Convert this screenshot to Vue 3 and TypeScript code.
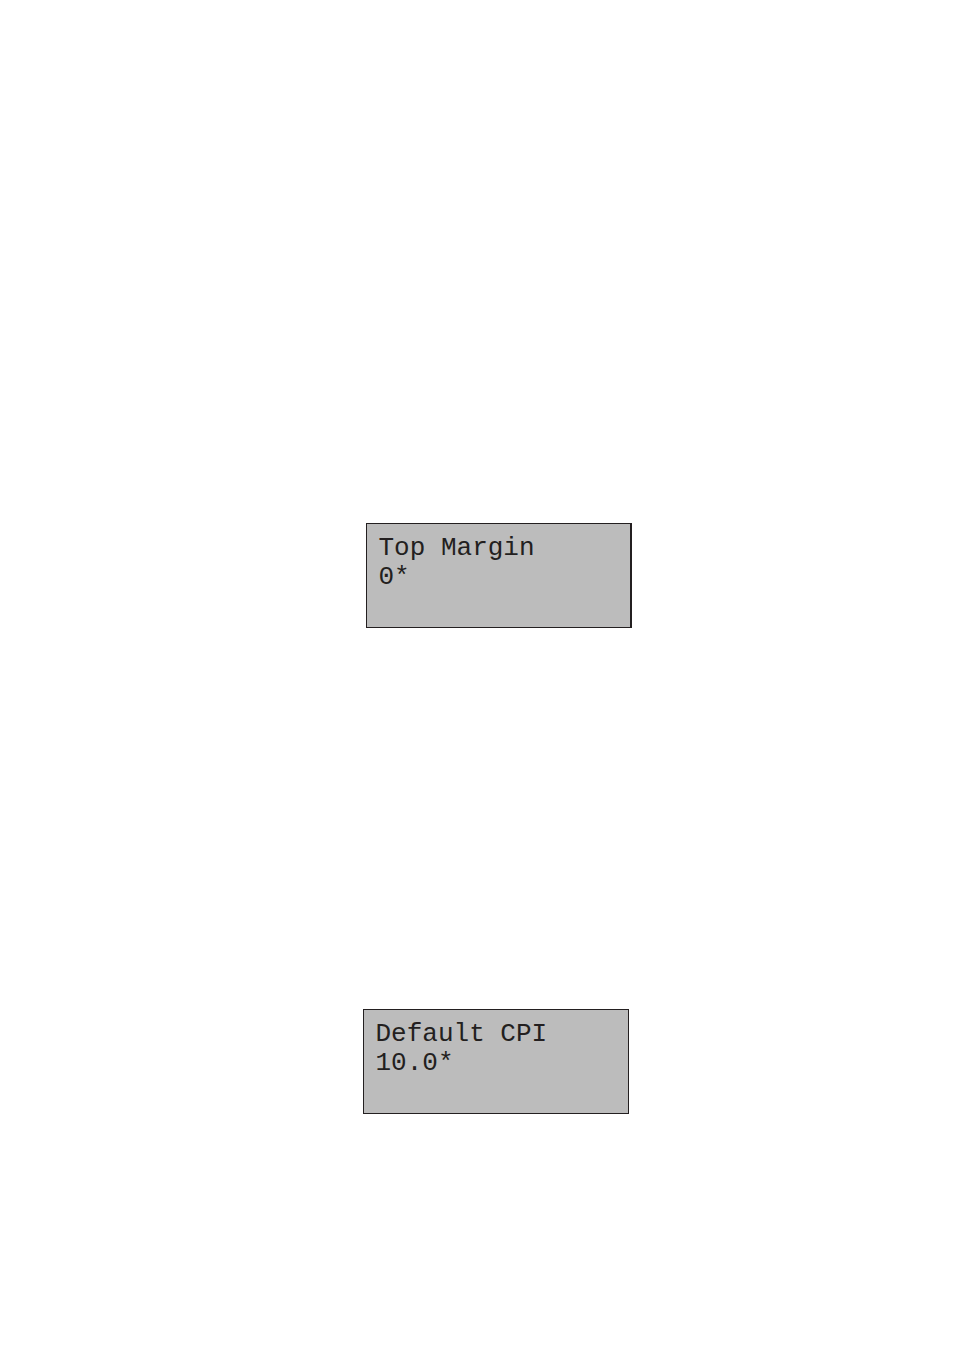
<script setup lang="ts">
interface Panel {
  id: string
  title: string
  value: string
  shaded: boolean
}

const panels: Panel[] = [
  { id: 'top-margin', title: 'Top Margin', value: '0*', shaded: true },
  { id: 'default-cpi', title: 'Default CPI', value: '10.0*', shaded: false },
]
</script>

<template>
  <main class="page">
    <section
      v-for="panel in panels"
      :key="panel.id"
      class="panel"
      :class="{ 'panel--shaded': panel.shaded }"
    >
      <p class="line">{{ panel.title }}</p>
      <p class="line">{{ panel.value }}</p>
    </section>
  </main>
</template>

<style>
body {
  margin: 0;
  background: #ffffff;
}
</style>

<style scoped>
.page {
  box-sizing: border-box;
  min-height: 100vh;
  padding: 523px 16px 64px 38%;
  display: flex;
  flex-direction: column;
  align-items: flex-start;
  gap: 381px;
}

.panel {
  box-sizing: border-box;
  width: 266px;
  max-width: 100%;
  min-height: 105px;
  padding: 10px 12px;
  border: 1px solid #231f20;
  background: #bcbcbc;
  color: #231f20;
  font-family: "Liberation Mono", "Courier New", monospace;
  font-size: 26px;
  line-height: 29px;
}

.panel--shaded {
  margin-left: 3px;
  border-right-width: 2px;
}

.line {
  margin: 0;
  white-space: nowrap;
}
</style>
